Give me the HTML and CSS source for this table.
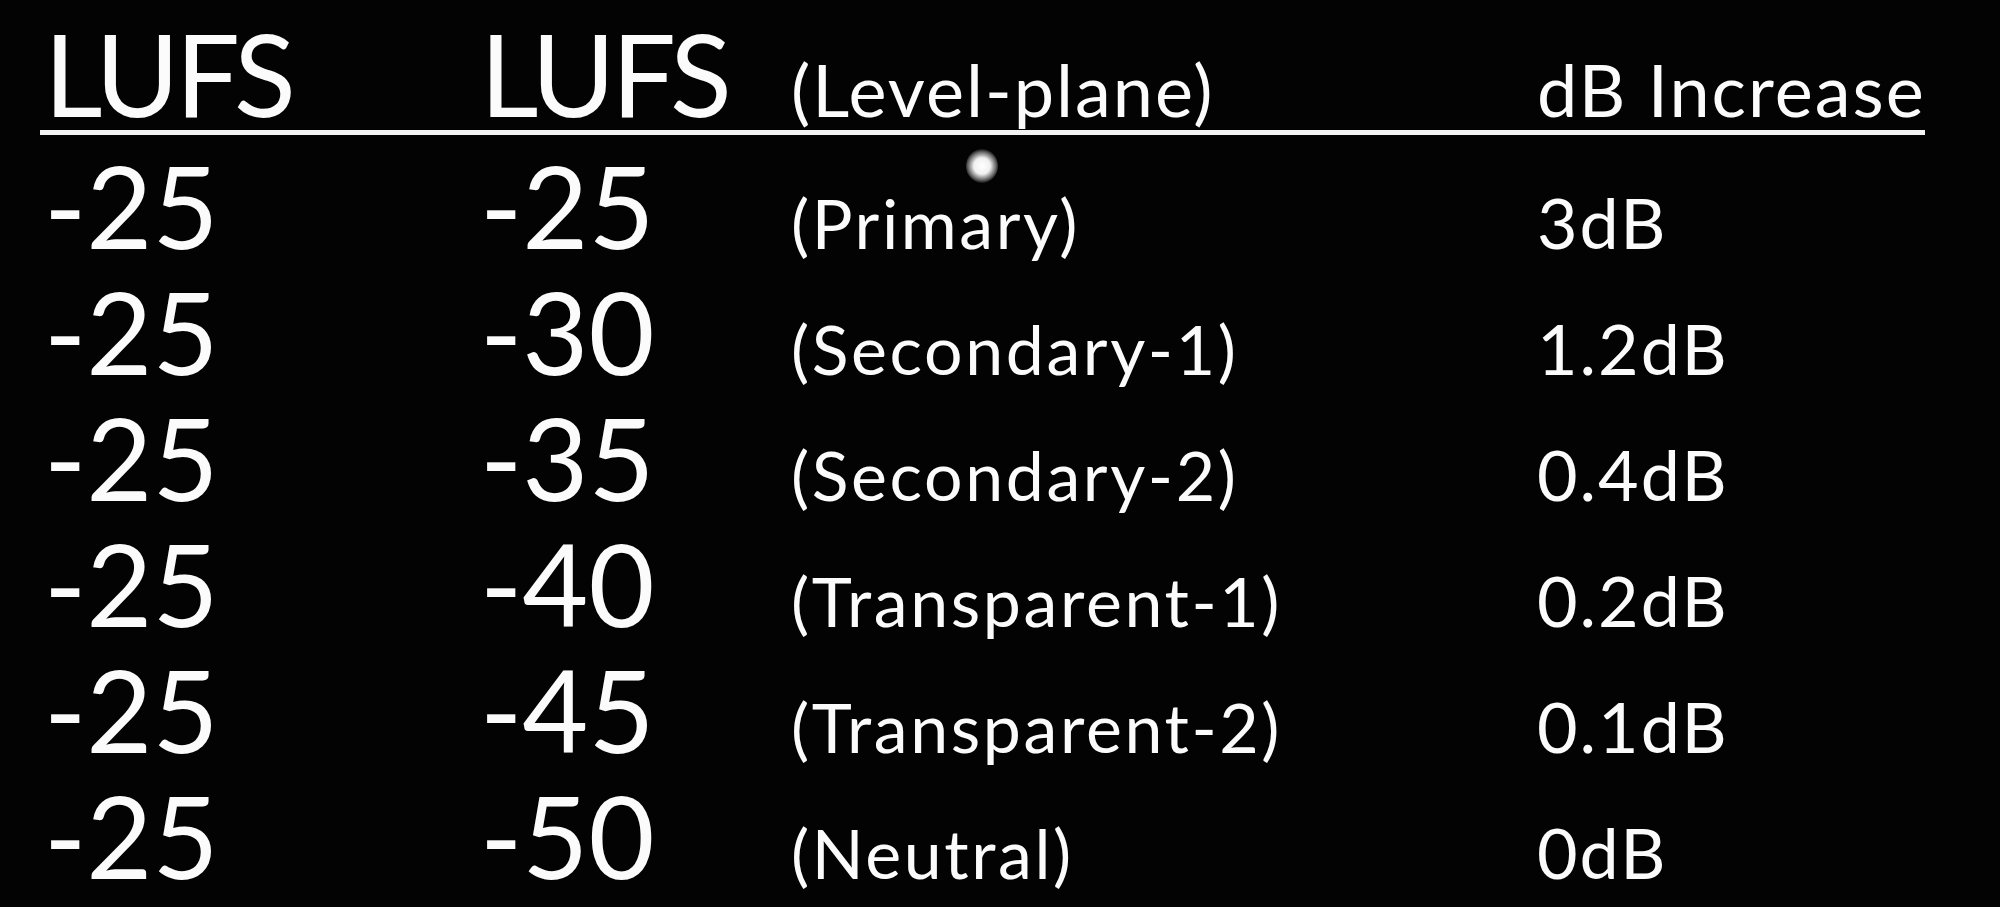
FILE: index.html
```html
<!DOCTYPE html>
<html lang="en">
<head>
<meta charset="utf-8">
<title>LUFS Level-plane table</title>
<link rel="stylesheet" href="styles.css">
</head>
<body>
<div class="screen">
  <div class="table">
    <div class="row head">
      <div class="cell big">LUFS</div>
      <div class="cell big">LUFS</div>
      <div class="cell mid">(Level-plane)</div>
      <div class="cell mid">dB Increase</div>
    </div>
    <div class="body">
      <div class="row">
        <div class="cell big">-25</div>
        <div class="cell big">-25</div>
        <div class="cell label">(Primary)</div>
        <div class="cell val">3dB</div>
      </div>
      <div class="row">
        <div class="cell big">-25</div>
        <div class="cell big">-30</div>
        <div class="cell label">(Secondary-1)</div>
        <div class="cell val">1.2dB</div>
      </div>
      <div class="row">
        <div class="cell big">-25</div>
        <div class="cell big">-35</div>
        <div class="cell label">(Secondary-2)</div>
        <div class="cell val">0.4dB</div>
      </div>
      <div class="row">
        <div class="cell big">-25</div>
        <div class="cell big">-40</div>
        <div class="cell label">(Transparent-1)</div>
        <div class="cell val">0.2dB</div>
      </div>
      <div class="row">
        <div class="cell big">-25</div>
        <div class="cell big">-45</div>
        <div class="cell label">(Transparent-2)</div>
        <div class="cell val">0.1dB</div>
      </div>
      <div class="row">
        <div class="cell big">-25</div>
        <div class="cell big">-50</div>
        <div class="cell label">(Neutral)</div>
        <div class="cell val">0dB</div>
      </div>
    </div>
  </div>
  <div class="glare"></div>
</div>
</body>
</html>
```
FILE: styles.css
```css
html, body {
  margin: 0;
  padding: 0;
  background: #030303;
}
body {
  font-family: Lato, "Open Sans", "DejaVu Sans", sans-serif;
  color: #fbfbfb;
}
.screen {
  position: relative;
  width: 2000px;
  height: 907px;
  overflow: hidden;
  background: #030303;
}
.table {
  padding-left: 40px;
  width: 1885px;
}
.row {
  display: grid;
  grid-template-columns: 436px 315px 746px 1fr;
  align-items: baseline;
  height: 126px;
}
.head {
  height: auto;
  padding-top: 15px;
  border-bottom: 5px solid #f4f4f4;
}
.body {
  padding-top: 13px;
}
.cell {
  line-height: 1;
  white-space: nowrap;
}
.head .big {
  line-height: 115px;
  letter-spacing: -4px;
}
.head .mid {
  line-height: 1;
}
.big {
  font-size: 114px;
  padding-left: 4px;
}
.mid {
  font-size: 72px;
  letter-spacing: 2px;
}
.label {
  font-size: 68px;
  letter-spacing: 2.6px;
}
.val {
  font-size: 70px;
  letter-spacing: 2px;
}
.glare {
  position: absolute;
  left: 966px;
  top: 149px;
  width: 32px;
  height: 34px;
  border-radius: 50%;
  background: radial-gradient(circle, #ffffff 0%, #f0f0f0 35%, rgba(200,200,200,0.5) 60%, rgba(0,0,0,0) 75%);
}
```
